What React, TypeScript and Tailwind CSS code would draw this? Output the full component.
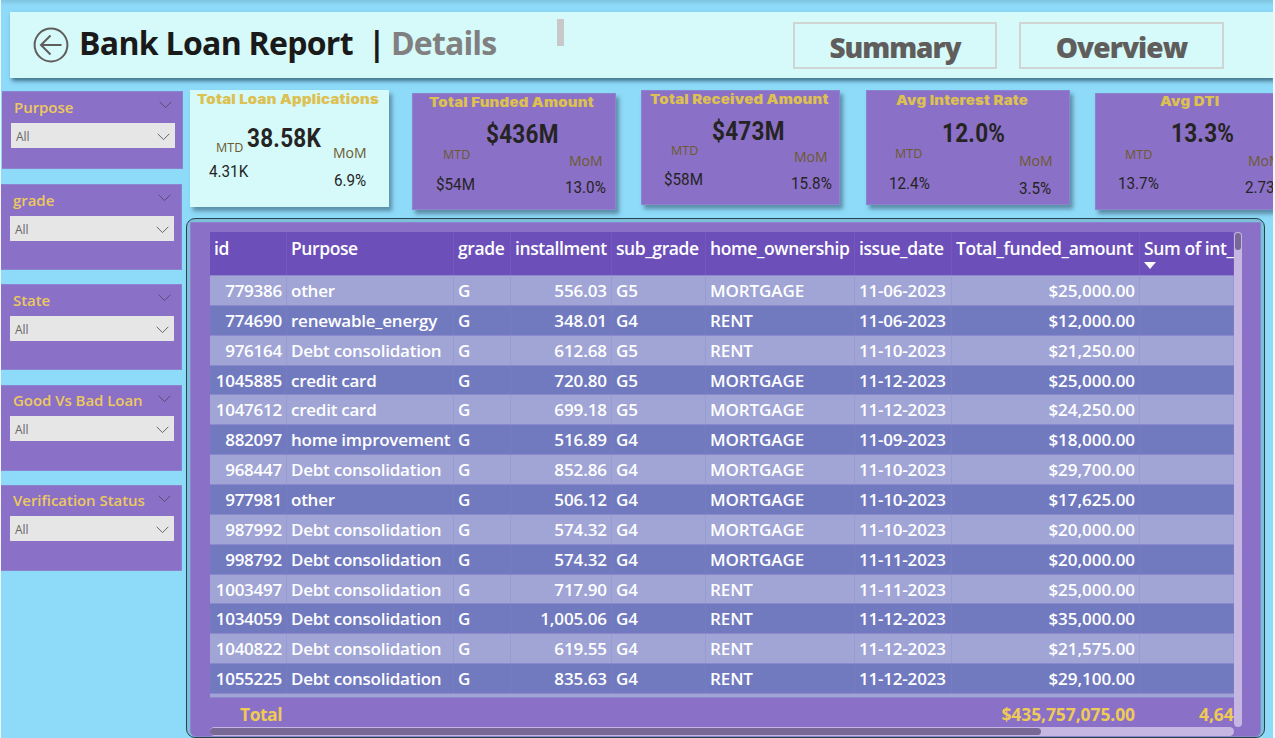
import React from "react";

type Field = { text: string; at: string };

type Kpi = {
  box: string;
  title: Field;
  value: Field;
  mtd: Field;
  mtdValue: Field;
  mom: Field;
  momValue: Field;
};

const kpis: Kpi[] = [
  {
    box: "w-[199px] h-[117px] bg-[#d6f9f9] border-[#d6f9f9]",
    title: { text: "Total Loan Applications", at: "ml-[6px] mt-[2px]" },
    value: { text: "38.58K", at: "ml-[56px] mt-[35px]" },
    mtd: { text: "MTD", at: "ml-[25px] mt-[51px]" },
    mtdValue: { text: "4.31K", at: "ml-[18px] mt-[73px]" },
    mom: { text: "MoM", at: "ml-[142px] mt-[55px]" },
    momValue: { text: "6.9%", at: "ml-[143px] mt-[82px]" },
  },
  {
    box: "ml-[23px] mt-[3px] w-[204px] h-[117px] bg-[#8b70c7] border-[#8b85d0]",
    title: { text: "Total Funded Amount", at: "ml-[16px] mt-[2px]" },
    value: { text: "$436M", at: "ml-[73px] mt-[28px]" },
    mtd: { text: "MTD", at: "ml-[30px] mt-[55px]" },
    mtdValue: { text: "$54M", at: "ml-[23px] mt-[83px]" },
    mom: { text: "MoM", at: "ml-[156px] mt-[60px]" },
    momValue: { text: "13.0%", at: "ml-[152px] mt-[86px]" },
  },
  {
    box: "ml-[25px] w-[199px] h-[115px] bg-[#8b70c7] border-[#8b85d0]",
    title: { text: "Total Received Amount", at: "ml-[8px] mt-[2px]" },
    value: { text: "$473M", at: "ml-[70px] mt-[28px]" },
    mtd: { text: "MTD", at: "ml-[29px] mt-[54px]" },
    mtdValue: { text: "$58M", at: "ml-[22px] mt-[81px]" },
    mom: { text: "MoM", at: "ml-[152px] mt-[59px]" },
    momValue: { text: "15.8%", at: "ml-[149px] mt-[85px]" },
  },
  {
    box: "ml-[26px] w-[204px] h-[115px] bg-[#8b70c7] border-[#8b85d0]",
    title: { text: "Avg Interest Rate", at: "ml-[29px] mt-[3px]" },
    value: { text: "12.0%", at: "ml-[75px] mt-[30px]" },
    mtd: { text: "MTD", at: "ml-[28px] mt-[57px]" },
    mtdValue: { text: "12.4%", at: "ml-[22px] mt-[85px]" },
    mom: { text: "MoM", at: "ml-[152px] mt-[63px]" },
    momValue: { text: "3.5%", at: "ml-[152px] mt-[90px]" },
  },
  {
    box: "ml-[25px] mt-[3px] w-[204px] h-[117px] bg-[#8b70c7] border-[#8b85d0]",
    title: { text: "Avg DTI", at: "ml-[64px] mt-[1px]" },
    value: { text: "13.3%", at: "ml-[75px] mt-[27px]" },
    mtd: { text: "MTD", at: "ml-[29px] mt-[55px]" },
    mtdValue: { text: "13.7%", at: "ml-[22px] mt-[82px]" },
    mom: { text: "MoM", at: "ml-[152px] mt-[60px]" },
    momValue: { text: "2.73%", at: "ml-[149px] mt-[86px]" },
  },
];

function KpiCard({ k }: { k: Kpi }) {
  const cell = "[grid-area:1/1] justify-self-start origin-left whitespace-nowrap leading-none ";
  return (
    <div className={"grid shrink-0 content-start items-start border shadow-[3px_4px_4px_rgba(50,80,100,0.55)] " + k.box}>
      <div className={cell + "scale-x-[1.15] font-[Inter,sans-serif] text-[13px] font-black tracking-[0.2px] text-[#dcc052] " + k.title.at}>{k.title.text}</div>
      <div className={cell + "scale-x-90 font-[Roboto,sans-serif] text-[25px] font-bold tracking-[0.3px] text-[#252423] " + k.value.at}>{k.value.text}</div>
      <div className={cell + "text-[12.5px] text-[#6b5a2c] " + k.mtd.at}>{k.mtd.text}</div>
      <div className={cell + "scale-x-95 font-[Roboto,sans-serif] text-[16px] text-[#252423] " + k.mtdValue.at}>{k.mtdValue.text}</div>
      <div className={cell + "text-[14px] text-[#6b5a2c] " + k.mom.at}>{k.mom.text}</div>
      <div className={cell + "scale-x-95 font-[Roboto,sans-serif] text-[16px] text-[#252423] " + k.momValue.at}>{k.momValue.text}</div>
    </div>
  );
}

function Chevron({ className }: { className: string }) {
  return (
    <svg viewBox="0 0 13 8" className={"h-[8px] w-[13px] shrink-0 " + className} fill="none" stroke="currentColor" strokeWidth="1">
      <path d="M0.7 0.8 L6.5 6.6 L12.3 0.8" />
    </svg>
  );
}

const slicers = [
  { label: "Purpose", box: "ml-px h-[78px]", title: "pt-[8px]", select: "h-[31px]" },
  { label: "grade", box: "mt-[15px] h-[86px]", title: "pt-[8px]", select: "h-[31px]" },
  { label: "State", box: "mt-[14px] h-[86px]", title: "pt-[8px]", select: "h-[31px]" },
  { label: "Good Vs Bad Loan", box: "mt-[15px] h-[86px]", title: "pt-[7px]", select: "h-[30px]" },
  { label: "Verification Status", box: "mt-[14px] h-[86px]", title: "pt-[7px]", select: "h-[30px]" },
];

function Slicer({ label, box, title, select }: (typeof slicers)[number]) {
  return (
    <div className={"w-[181px] border border-l-0 border-[#8b85d0] bg-[#8b70c7] pl-[9px] pr-[7px] " + box}>
      <div className={"flex items-start justify-between " + select}>
        <span className={"pl-[3px] text-[15px] font-semibold leading-[15px] tracking-[-0.05px] text-[#ecc95f] " + title}>{label}</span>
        <Chevron className="mr-[3px] mt-[9px] text-[#5b4d70]" />
      </div>
      <div className="flex h-[25px] w-[164px] items-center justify-between bg-[#e6e6e6] pl-[5px] pr-[5px] text-[#666]">
        <span className="pt-[2px] text-[12px] leading-none">All</span>
        <Chevron className="mt-[2px]" />
      </div>
    </div>
  );
}

const headers = ["id", "Purpose", "grade", "installment", "sub_grade", "home_ownership", "issue_date", "Total_funded_amount", "Sum of int_rate"];

const rows = [
  ["779386", "other", "G", "556.03", "G5", "MORTGAGE", "11-06-2023", "$25,000.00"],
  ["774690", "renewable_energy", "G", "348.01", "G4", "RENT", "11-06-2023", "$12,000.00"],
  ["976164", "Debt consolidation", "G", "612.68", "G5", "RENT", "11-10-2023", "$21,250.00"],
  ["1045885", "credit card", "G", "720.80", "G5", "MORTGAGE", "11-12-2023", "$25,000.00"],
  ["1047612", "credit card", "G", "699.18", "G5", "MORTGAGE", "11-12-2023", "$24,250.00"],
  ["882097", "home improvement", "G", "516.89", "G4", "MORTGAGE", "11-09-2023", "$18,000.00"],
  ["968447", "Debt consolidation", "G", "852.86", "G4", "MORTGAGE", "11-10-2023", "$29,700.00"],
  ["977981", "other", "G", "506.12", "G4", "MORTGAGE", "11-10-2023", "$17,625.00"],
  ["987992", "Debt consolidation", "G", "574.32", "G4", "MORTGAGE", "11-10-2023", "$20,000.00"],
  ["998792", "Debt consolidation", "G", "574.32", "G4", "MORTGAGE", "11-11-2023", "$20,000.00"],
  ["1003497", "Debt consolidation", "G", "717.90", "G4", "RENT", "11-11-2023", "$25,000.00"],
  ["1034059", "Debt consolidation", "G", "1,005.06", "G4", "RENT", "11-12-2023", "$35,000.00"],
  ["1040822", "Debt consolidation", "G", "619.55", "G4", "RENT", "11-12-2023", "$21,575.00"],
  ["1055225", "Debt consolidation", "G", "835.63", "G4", "RENT", "11-12-2023", "$29,100.00"],
];

const grid = "grid w-[1024px] grid-cols-[77px_167px_57px_101px_94px_149px_97px_188px_94px] overflow-hidden whitespace-nowrap ";

const columnStyles = [
  "text-right tracking-[-0.25px]",
  "tracking-[-0.25px]",
  "",
  "text-right tracking-[-0.1px]",
  "tracking-[-0.1px]",
  "tracking-[-0.1px]",
  "tracking-[-0.2px]",
  "text-right tracking-[-0.05px]",
  "",
];

export default function App() {
  return (
    <div className="h-[738px] w-[1275px] overflow-hidden bg-[#f3f6f8] pl-px pr-[2px] font-['Open_Sans','Noto_Sans',sans-serif]">
      <div className="flex h-full flex-col overflow-hidden bg-[#8edaf9]">
        <div className="h-[12px] shrink-0 bg-linear-to-b from-[#7fc4df] to-[#8edaf9] to-45%" />
        <header className="ml-[9px] flex h-[66px] shrink-0 bg-[#d6f9f9] shadow-[2px_3px_4px_rgba(40,80,100,0.75)]">
          <svg viewBox="0 0 36 36" className="ml-[23px] mt-[15px] h-[36px] w-[36px] shrink-0" fill="none" stroke="#605e5c" strokeWidth="2">
            <circle cx="18" cy="18" r="16.4" />
            <path d="M28.5 18 H8 M17.5 8.5 L8 18 L17.5 27.5" />
          </svg>
          <h1 className="ml-[10px] mt-[12px] flex w-[430px] whitespace-nowrap text-[32px] font-bold leading-[38px] text-[#1a1a1a]">
            <span className="w-[289px] tracking-[-0.7px]">Bank Loan Report</span>
            <span className="w-[23px]">|</span>
            <span className="tracking-[-0.85px] text-[#808080]">Details</span>
          </h1>
          <div className="ml-[48px] mt-[7px] h-[27px] w-[7px] bg-[#c8c8c8]" />
          <button className="ml-[229px] mt-[10px] h-[47px] w-[204px] shrink-0 border-2 border-[#cfd5d4] pt-[2px] text-[28px] font-extrabold leading-[40px] tracking-[-1.1px] text-[#605e5c]">Summary</button>
          <button className="ml-[22px] mt-[10px] h-[47px] w-[205px] shrink-0 border-2 border-[#cfd5d4] pt-[3px] text-[28px] font-extrabold leading-[40px] tracking-[-0.9px] text-[#605e5c]">Overview</button>
        </header>
        <div className="mt-[12px] flex min-h-0 flex-1">
          <aside className="w-[185px] shrink-0 pt-px">
            {slicers.map((s) => (
              <Slicer key={s.label} {...s} />
            ))}
          </aside>
          <main className="min-w-0 flex-1">
            <div className="ml-[4px] flex h-[128px] items-start">
              {kpis.map((k) => (
                <KpiCard key={k.title.text} k={k} />
              ))}
            </div>
            <section className="h-[520px] w-[1079px] overflow-hidden rounded-[9px] border border-[#27434e] bg-[#7dbfd9] p-[3px] pb-0">
              <div className="h-full w-full rounded-b-[6px] border border-[#8b85d0] bg-[#8b70c7] pl-[19px] pt-[9px]">
                <div className="flex">
                  <div>
                    <div className={grid + "h-[43px] bg-[#6c4fb9] text-[17.5px] font-semibold leading-[33px] tracking-[-0.4px] text-white"}>
                      {headers.map((h, i) => (
                        <div key={h} className="border-r border-[#7558bd] pl-[4px]">
                          {h}
                          {i === 8 && (
                            <svg viewBox="0 0 12 7" className="-mt-[3px] h-[7px] w-[12px]">
                              <path d="M0 0 H12 L6 7 Z" fill="#fff" />
                            </svg>
                          )}
                        </div>
                      ))}
                    </div>
                    {rows.map((r, n) => (
                      <div
                        key={r[0]}
                        className={
                          grid +
                          "h-[29.87px] border-t border-[#8b88cd] text-[17px] font-semibold text-white " +
                          (n % 2 ? "bg-[#717abf] leading-[29px]" : "bg-[#a0a5d6] leading-[30px]")
                        }
                      >
                        {[...r, ""].map((c, i) => (
                          <div key={i} className={"border-r border-[#8484c84d] pl-[4px] pr-[4px] " + columnStyles[i]}>
                            {c}
                          </div>
                        ))}
                      </div>
                    ))}
                    <div className="h-[5px] w-[1024px] border-y border-[#8b88cd] bg-[#a0a5d6]" />
                    <div className={grid + "h-[29px] text-[17.5px] font-bold leading-[33px] tracking-[-0.1px] text-[#eecb55]"}>
                      <div className="pr-[5px] text-right tracking-[-0.5px]">Total</div>
                      <div className="col-span-7 pr-[5px] text-right">$435,757,075.00</div>
                      <div className="pl-[59px]">4,645</div>
                    </div>
                    <div className="h-[9px] w-[1024px] rounded-full bg-[#c6b6e2] py-px">
                      <div className="h-[7px] w-[831px] rounded-full bg-[#776896]" />
                    </div>
                  </div>
                  <div className="h-[495px] w-[8px] rounded-full bg-[#c6b6e2] p-px">
                    <div className="h-[17px] w-[6px] rounded-full bg-[#776896]" />
                  </div>
                </div>
              </div>
            </section>
          </main>
        </div>
      </div>
    </div>
  );
}
